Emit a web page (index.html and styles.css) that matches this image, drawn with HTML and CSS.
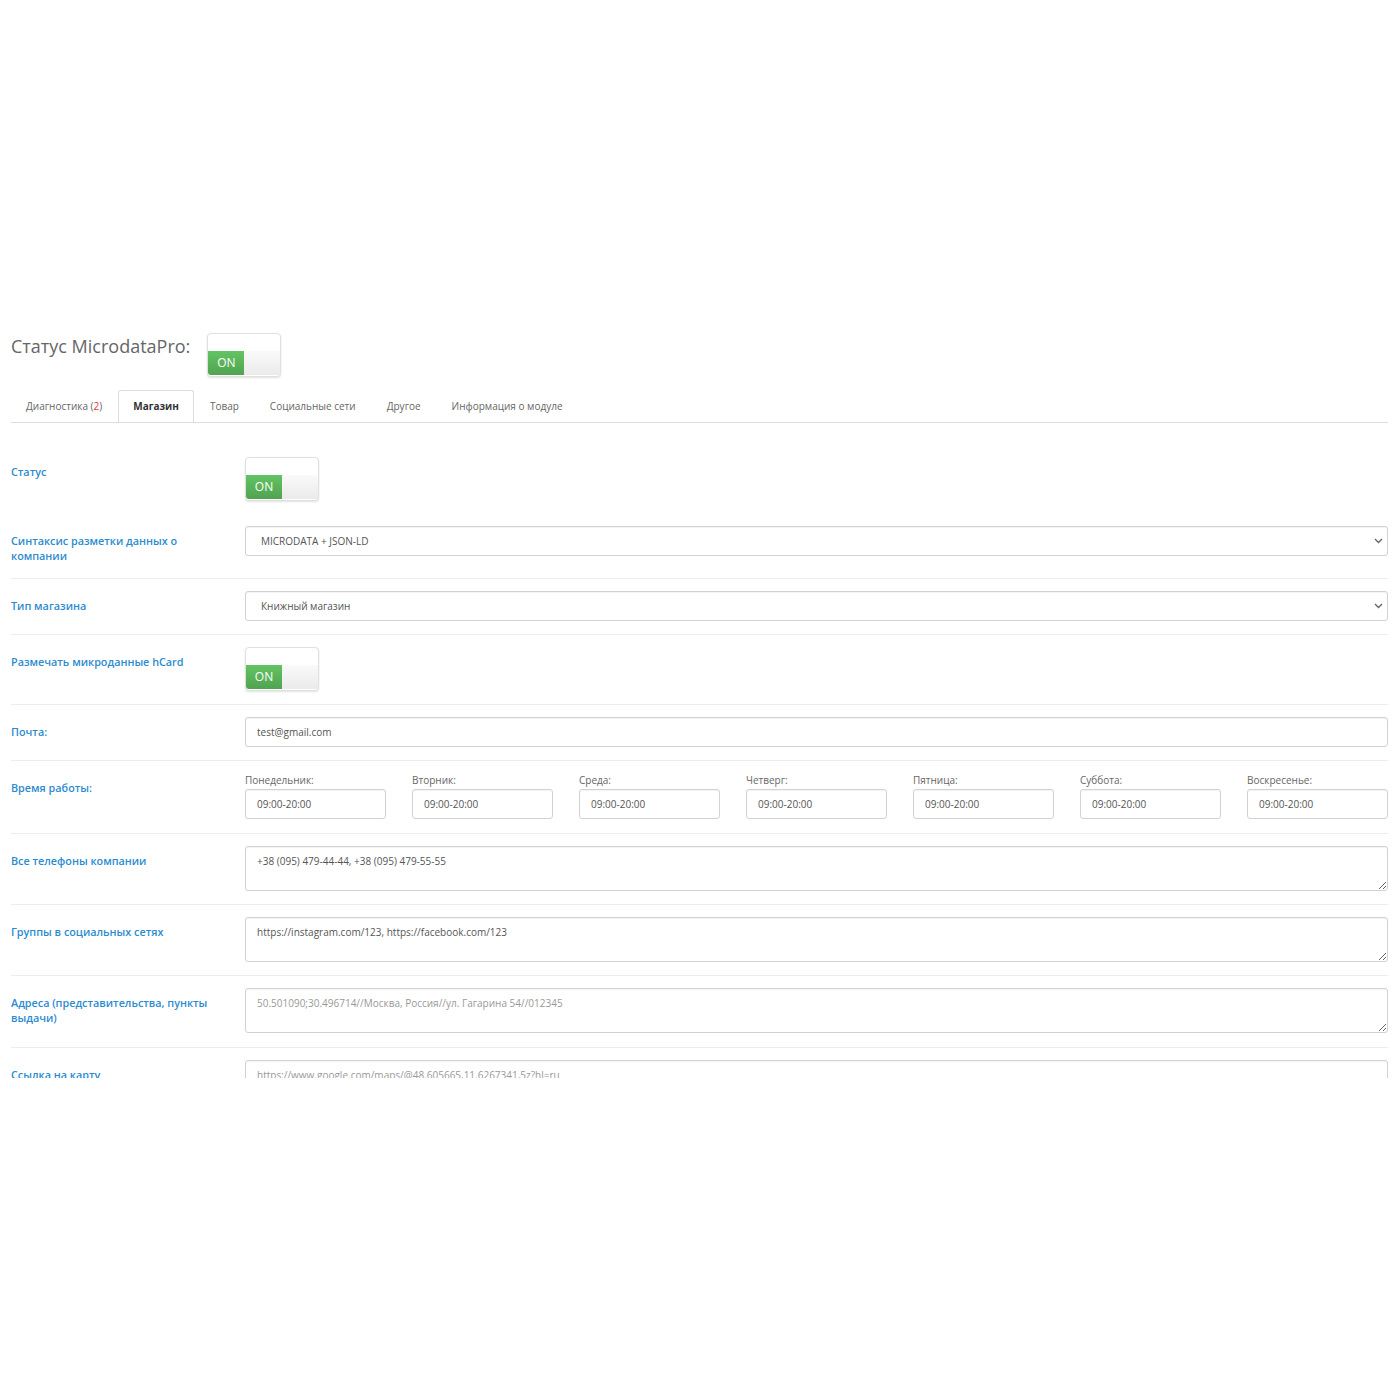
FILE: index.html
```html
<!DOCTYPE html>
<html lang="ru">
<head>
<meta charset="utf-8">
<title>MicrodataPro</title>
<link rel="stylesheet" href="styles.css">
</head>
<body>
<div class="page">
  <div class="header">
    <h1 class="title">Статус MicrodataPro:</h1>
    <div class="switch"><span class="switch-top"></span><span class="switch-row"><span class="switch-on">ON</span><span class="switch-off"></span></span></div>
  </div>

  <ul class="tabs">
    <li class="tab">Диагностика (<span class="red">2</span>)</li>
    <li class="tab active">Магазин</li>
    <li class="tab">Товар</li>
    <li class="tab">Социальные сети</li>
    <li class="tab">Другое</li>
    <li class="tab">Информация о модуле</li>
  </ul>

  <div class="form">
    <div class="row nosep">
      <label class="label">Статус</label>
      <div class="control"><div class="switch"><span class="switch-top"></span><span class="switch-row"><span class="switch-on">ON</span><span class="switch-off"></span></span></div></div>
    </div>
    <div class="row nosep">
      <label class="label">Синтаксис разметки данных о компании</label>
      <div class="control">
        <div class="select-wrap">
          <select class="field select"><option>MICRODATA + JSON-LD</option></select>
          <svg class="chev" width="9" height="6" viewBox="0 0 9 6"><path d="M1 1l3.5 3.5L8 1" fill="none" stroke="#666" stroke-width="1.4"/></svg>
        </div>
      </div>
    </div>
    <div class="row">
      <label class="label">Тип магазина</label>
      <div class="control">
        <div class="select-wrap">
          <select class="field select"><option>Книжный магазин</option></select>
          <svg class="chev" width="9" height="6" viewBox="0 0 9 6"><path d="M1 1l3.5 3.5L8 1" fill="none" stroke="#666" stroke-width="1.4"/></svg>
        </div>
      </div>
    </div>
    <div class="row">
      <label class="label">Размечать микроданные hCard</label>
      <div class="control"><div class="switch"><span class="switch-top"></span><span class="switch-row"><span class="switch-on">ON</span><span class="switch-off"></span></span></div></div>
    </div>
    <div class="row">
      <label class="label">Почта:</label>
      <div class="control"><input class="field" type="text" value="test@gmail.com"></div>
    </div>
    <div class="row">
      <label class="label">Время работы:</label>
      <div class="control hours">
        <div class="day"><span class="day-label">Понедельник:</span><input class="field" type="text" value="09:00-20:00"></div>
        <div class="day"><span class="day-label">Вторник:</span><input class="field" type="text" value="09:00-20:00"></div>
        <div class="day"><span class="day-label">Среда:</span><input class="field" type="text" value="09:00-20:00"></div>
        <div class="day"><span class="day-label">Четверг:</span><input class="field" type="text" value="09:00-20:00"></div>
        <div class="day"><span class="day-label">Пятница:</span><input class="field" type="text" value="09:00-20:00"></div>
        <div class="day"><span class="day-label">Суббота:</span><input class="field" type="text" value="09:00-20:00"></div>
        <div class="day"><span class="day-label">Воскресенье:</span><input class="field" type="text" value="09:00-20:00"></div>
      </div>
    </div>
    <div class="row">
      <label class="label">Все телефоны компании</label>
      <div class="control"><textarea class="field area">+38 (095) 479-44-44, +38 (095) 479-55-55</textarea></div>
    </div>
    <div class="row">
      <label class="label">Группы в социальных сетях</label>
      <div class="control"><textarea class="field area">https://instagram.com/123, https://facebook.com/123</textarea></div>
    </div>
    <div class="row">
      <label class="label">Адреса (представительства, пункты выдачи)</label>
      <div class="control"><textarea class="field area" placeholder="50.501090;30.496714//Москва, Россия//ул. Гагарина 54//012345"></textarea></div>
    </div>
    <div class="row">
      <label class="label">Ссылка на карту</label>
      <div class="control"><input class="field" type="text" placeholder="https://www.google.com/maps/@48.605665,11.6267341,5z?hl=ru"></div>
    </div>
  </div>
</div>
</body>
</html>
```

FILE: styles.css
```css
html, body {
  margin: 0;
  padding: 0;
  background: #fff;
}
body {
  font-family: "Open Sans", "Liberation Sans", sans-serif;
  color: #555;
}
.page {
  height: 1078px;
  overflow: hidden;
  padding: 333px 12px 0 11px;
  box-sizing: border-box;
}
.header {
  display: flex;
  align-items: flex-start;
  gap: 17px;
}
.title {
  margin: 0;
  font-size: 18px;
  font-weight: 400;
  line-height: 26px;
  color: #666;
}
.switch {
  width: 74px;
  height: 44px;
  box-sizing: border-box;
  border: 1px solid #e0e0e0;
  border-radius: 4px;
  background: #fff;
  box-shadow: 0 1px 2px rgba(0,0,0,0.12);
  display: flex;
  flex-direction: column;
  overflow: hidden;
}
.switch-top {
  flex: 1;
}
.switch-row {
  display: flex;
  height: 24px;
  margin-bottom: 1px;
}
.switch-on {
  width: 36px;
  background: linear-gradient(#62c462, #51a351);
  color: #fff;
  font-size: 12px;
  line-height: 24px;
  text-align: center;
  border-radius: 0 0 0 3px;
}
.switch-off {
  flex: 1;
  background: linear-gradient(#fafafa, #eaeaea);
}
.tabs {
  list-style: none;
  margin: 13px 0 0;
  padding: 0;
  display: flex;
  border-bottom: 1px solid #ddd;
  height: 32px;
}
.tab {
  padding: 0 14px;
  margin-right: 1px;
  font-size: 10px;
  line-height: 31px;
  color: #666;
  border: 1px solid transparent;
  border-bottom: none;
  border-radius: 3px 3px 0 0;
  white-space: nowrap;
}
.tab.active {
  border-color: #ddd;
  background: #fff;
  color: #333;
  font-weight: 700;
  height: 32px;
  box-sizing: border-box;
}
.red { color: #e33; }
.form {
  margin-top: 22px;
}
.row {
  display: flex;
  padding: 12px 0 13.3px;
  border-top: 1px solid #ededed;
}
.row.nosep {
  border-top: none;
}
.label {
  width: 234px;
  flex: none;
  box-sizing: border-box;
  padding: 7px 26px 1px 0;
  font-size: 10.8px;
  line-height: 15px;
  font-weight: 600;
  color: #2b8bd0;
}
.control {
  flex: 1;
  min-width: 0;
}
.field {
  display: block;
  width: 100%;
  height: 30px;
  box-sizing: border-box;
  border: 1px solid #d2d2d2;
  border-radius: 3px;
  box-shadow: inset 0 1px 1px rgba(0,0,0,0.05);
  padding: 0 11px;
  font-family: "Open Sans", "Liberation Sans", sans-serif;
  font-size: 10px;
  color: #555;
  background: #fff;
  margin: 0;
}
.field::placeholder {
  color: #999;
}
.select-wrap {
  position: relative;
}
.select {
  appearance: none;
  -webkit-appearance: none;
  padding-left: 15px;
}
.chev {
  position: absolute;
  right: 5px;
  top: 12px;
  pointer-events: none;
}
.area {
  height: 45px;
  padding: 7px 11px;
  line-height: 14px;
  resize: vertical;
}
.hours {
  display: grid;
  grid-template-columns: repeat(7, 1fr);
  column-gap: 26px;
}
.day-label {
  display: block;
  font-size: 10px;
  line-height: 15px;
  color: #666;
  margin-bottom: 1px;
}
```
